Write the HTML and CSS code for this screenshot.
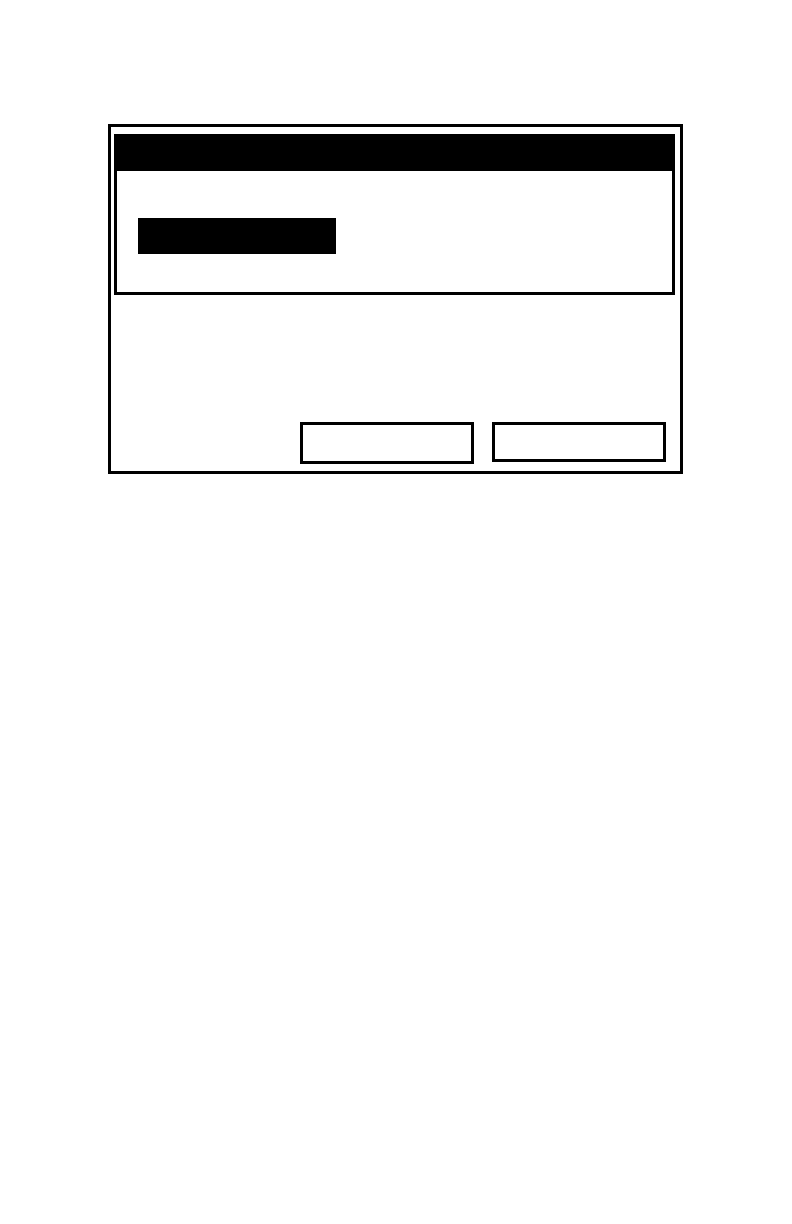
FILE: index.html
```html
<!DOCTYPE html>
<html>
<head>
<meta charset="utf-8">
<link rel="stylesheet" href="styles.css">
</head>
<body>
<div class="dialog">
  <div class="panel">
    <div class="panel-header"></div>
    <div class="panel-body">
      <div class="selected-field"></div>
    </div>
  </div>
  <div class="buttons">
    <div class="btn btn-tall"></div>
    <div class="btn btn-short"></div>
  </div>
</div>
</body>
</html>
```
FILE: styles.css
```css
html, body {
  margin: 0;
  padding: 0;
  background: #ffffff;
  font-family: "Liberation Sans", Arial, sans-serif;
}
.dialog {
  box-sizing: border-box;
  margin: 124px 0 0 108px;
  width: 575px;
  height: 350px;
  border: 3px solid #000;
  padding: 7px 5px 0 3px;
  display: flex;
  flex-direction: column;
}
.panel {
  box-sizing: border-box;
  width: 561px;
  height: 161px;
  border: 3px solid #000;
  border-top: 0;
  display: flex;
  flex-direction: column;
}
.panel-header {
  height: 37px;
  background: #000;
  margin: 0 -3px;
}
.panel-body {
  padding: 47px 0 0 21px;
}
.selected-field {
  width: 198px;
  height: 36px;
  background: #000;
}
.buttons {
  margin-top: 127px;
  display: flex;
  justify-content: flex-end;
  align-items: flex-start;
  gap: 18px;
  padding-right: 9px;
}
.btn {
  box-sizing: border-box;
  width: 174px;
  border: 3px solid #000;
  background: #fff;
}
.btn-tall { height: 42px; }
.btn-short { height: 40px; }
```
